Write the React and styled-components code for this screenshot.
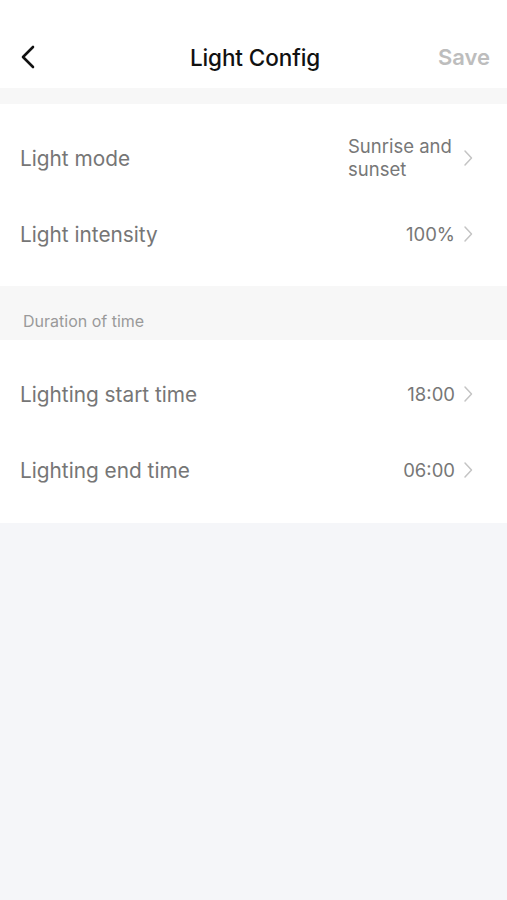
import React from "react";
import styled, { createGlobalStyle } from "styled-components";

const Global = createGlobalStyle`
  html, body { margin: 0; padding: 0; background: #f5f6f9; }
  body { font-family: Inter, "Noto Sans", "Liberation Sans", sans-serif; -webkit-font-smoothing: antialiased; }
  * { box-sizing: border-box; }
`;

const Page = styled.div`
  width: 507px;
  min-height: 900px;
  background: #f5f6f9;
  display: flex;
  flex-direction: column;
`;

const Header = styled.header`
  height: 88px;
  background: #fff;
  display: grid;
  grid-template-columns: 80px 1fr 80px;
  align-items: center;
  padding: 26px 17px 0 20px;
`;

const BackBtn = styled.div`
  display: flex;
  align-items: center;
  height: 30px;
`;

const Title = styled.h1`
  margin: 0;
  text-align: center;
  font-size: 22.5px;
  font-weight: 500;
  color: #111;
  letter-spacing: -0.1px;
`;

const Save = styled.div`
  text-align: right;
  font-size: 22px;
  font-weight: 600;
  color: #bdbdbd;
`;

const Gap = styled.div`
  height: ${(p) => p.$h}px;
  background: #f7f7f7;
`;

const SectionTitle = styled.div`
  height: 54px;
  background: #f7f7f7;
  padding: 16px 23px 0;
  display: flex;
  align-items: center;
  font-size: 16px;
  color: #9a9a9a;
`;

const Card = styled.div`
  background: #fff;
  padding: 16px 0 ${(p) => p.$pb}px;
  display: flex;
  flex-direction: column;
`;

const Row = styled.div`
  height: 76px;
  display: flex;
  align-items: center;
  justify-content: space-between;
  padding: 0 34px 0 20px;
`;

const Label = styled.div`
  font-size: 20.8px;
  color: #767676;
`;

const Right = styled.div`
  display: flex;
  align-items: center;
  gap: 8px;
`;

const Value = styled.div`
  font-size: 18.5px;
  line-height: 23px;
  color: #777;
  width: ${(p) => (p.$narrow ? "107px" : "auto")};
  margin-top: ${(p) => (p.$narrow ? "-1px" : "0")};
`;

const Chevron = ({ color = "#c4c4c4" }) => (
  <svg width="10" height="18" viewBox="0 0 10 18" fill="none">
    <path d="M2 2l6.5 7L2 16" stroke={color} strokeWidth="1.5" strokeLinecap="round" strokeLinejoin="round" />
  </svg>
);

const Item = ({ label, value, narrow }) => (
  <Row>
    <Label>{label}</Label>
    <Right>
      <Value $narrow={narrow}>{value}</Value>
      <Chevron />
    </Right>
  </Row>
);

export default function App() {
  return (
    <>
      <Global />
      <Page>
        <Header>
          <BackBtn>
            <svg width="16" height="24" viewBox="0 0 16 24" fill="none">
              <path d="M13 2L3 12l10 10" stroke="#111" strokeWidth="2.6" strokeLinecap="round" strokeLinejoin="round" />
            </svg>
          </BackBtn>
          <Title>Light Config</Title>
          <Save>Save</Save>
        </Header>
        <Gap $h={16} />
        <Card $pb={14}>
          <Item label="Light mode" value="Sunrise and sunset" narrow />
          <Item label="Light intensity" value="100%" />
        </Card>
        <SectionTitle>Duration of time</SectionTitle>
        <Card $pb={15}>
          <Item label="Lighting start time" value="18:00" />
          <Item label="Lighting end time" value="06:00" />
        </Card>
      </Page>
    </>
  );
}
